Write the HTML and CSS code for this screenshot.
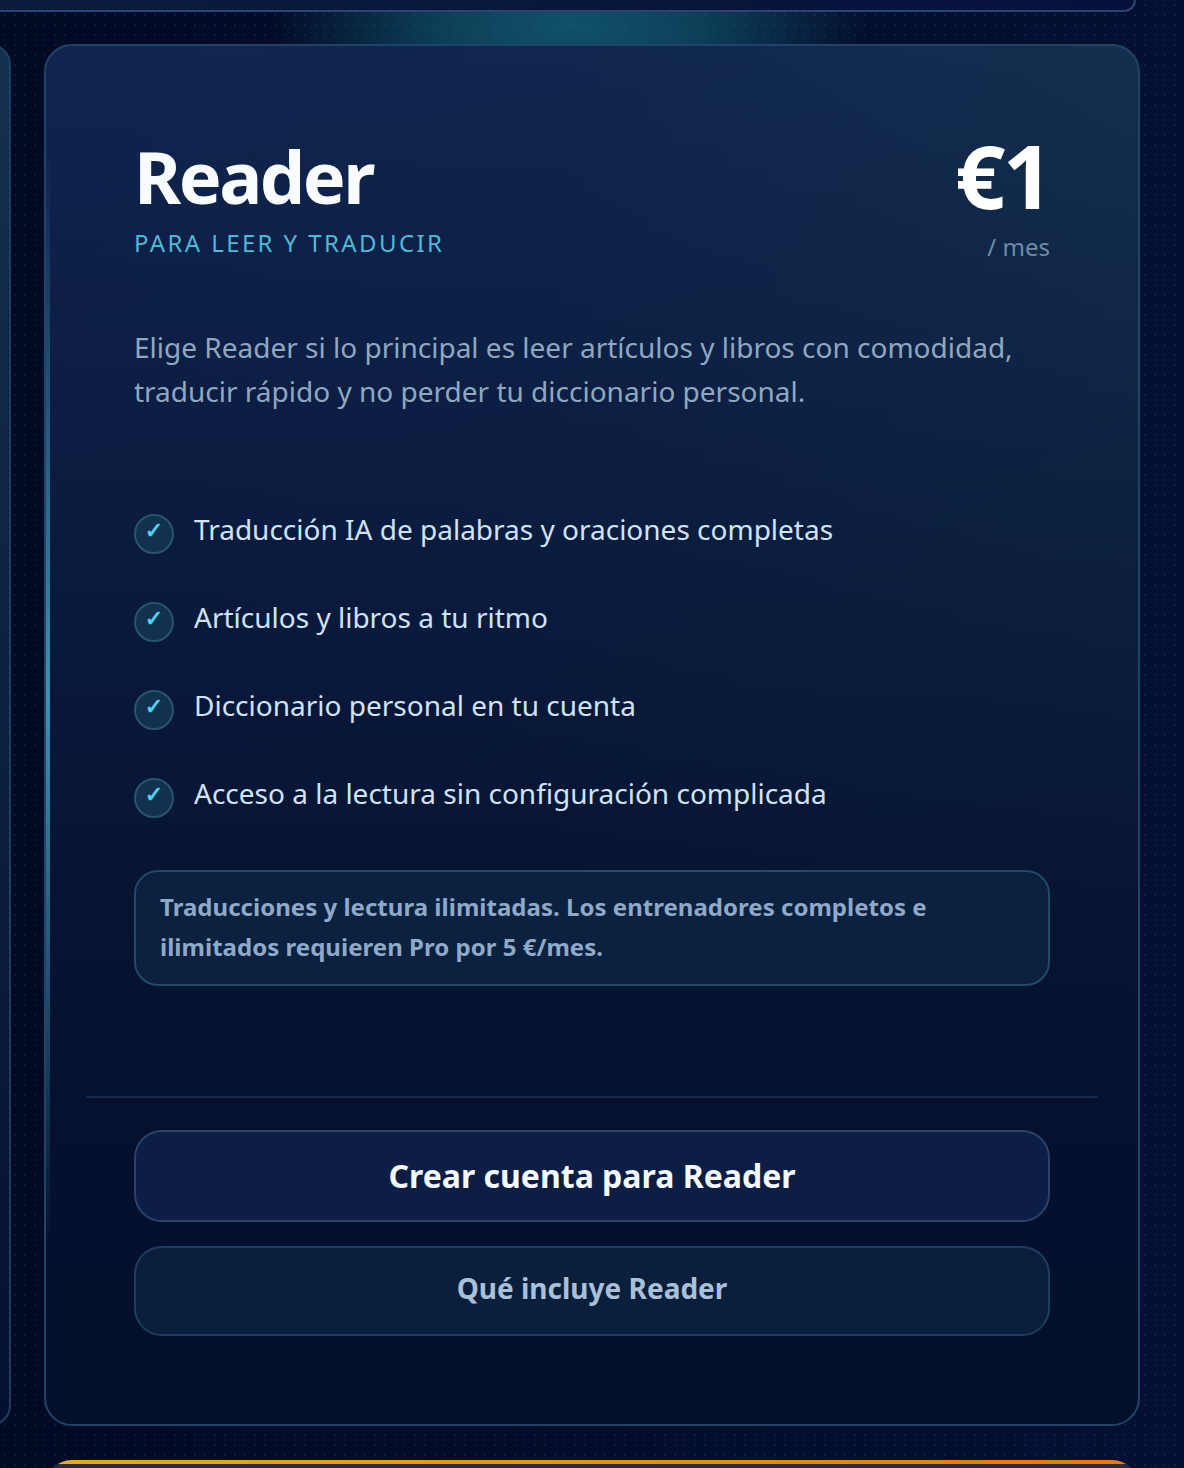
FILE: index.html
```html
<!DOCTYPE html>
<html lang="es">

<head>
    <meta charset="UTF-8">
    <meta name="viewport" content="width=device-width, initial-scale=1.0">
    <title>Reader</title>
    <link rel="stylesheet" href="styles.css">
</head>

<body>
    <div class="page">
        <div class="prev-plan"></div>

        <div class="plan-row">
            <div class="side-plan"></div>

            <section class="plan-card">
                <div class="plan-rail"></div>

                <div class="plan-body">
                    <header class="plan-head">
                        <div>
                            <h2 class="plan-name">Reader</h2>
                            <div class="plan-tag">PARA LEER Y TRADUCIR</div>
                        </div>
                        <div class="plan-price">
                            <div class="price-value">€1</div>
                            <div class="price-period">/ mes</div>
                        </div>
                    </header>

                    <p class="plan-desc">Elige Reader si lo principal es leer artículos y libros con comodidad, traducir rápido y no perder tu diccionario personal.</p>

                    <ul class="feature-list">
                        <li class="feature"><span class="feature-check">✓</span>Traducción IA de palabras y oraciones completas</li>
                        <li class="feature"><span class="feature-check">✓</span>Artículos y libros a tu ritmo</li>
                        <li class="feature"><span class="feature-check">✓</span>Diccionario personal en tu cuenta</li>
                        <li class="feature"><span class="feature-check">✓</span>Acceso a la lectura sin configuración complicada</li>
                    </ul>

                    <div class="plan-note">Traducciones y lectura ilimitadas. Los entrenadores completos e ilimitados requieren Pro por 5 €/mes.</div>
                </div>

                <footer class="plan-actions">
                    <a class="btn btn-primary">Crear cuenta para Reader</a>
                    <a class="btn btn-secondary">Qué incluye Reader</a>
                </footer>
            </section>
        </div>

        <div class="next-plan"></div>
    </div>
</body>

</html>
```

FILE: styles.css
```css
* {
    box-sizing: border-box;
}

body {
    margin: 0;
    background-color: #030d2c;
    font-family: "Noto Sans", Arial, sans-serif;
}

.page {
    height: 1468px;
    overflow: hidden;
    background-image:
        radial-gradient(ellipse 300px 130px at 570px 26px, rgba(22, 112, 132, 0.7) 0%, rgba(22, 112, 132, 0.5) 45%, transparent 100%),
        radial-gradient(circle at center, rgba(90, 130, 190, 0.13) 1px, transparent 1px),
        linear-gradient(90deg, #020a24 0%, #030d2c 60%, #041033 100%);
    background-size: 100% 100%, 10px 10px, 100% 100%;
}

.prev-plan {
    width: 1136px;
    height: 12px;
    background: linear-gradient(90deg, #0a1c3e, #061139);
    border-bottom: 2px solid #2b4474;
    border-right: 2px solid #2b4474;
    border-radius: 0 0 28px 0;
}

.plan-row {
    display: flex;
    gap: 33px;
    margin-top: 32px;
}

.side-plan {
    width: 41px;
    height: 1382px;
    margin-left: -30px;
    background: linear-gradient(180deg, #143050, #041030);
    border: 2px solid #1d3e62;
    border-radius: 28px;
}

.plan-card {
    position: relative;
    width: 1096px;
    height: 1382px;
    padding: 0 40px;
    background:
        linear-gradient(180deg, rgba(4, 16, 46, 0) 0%, #05112f 72%, #040f2c 100%),
        linear-gradient(100deg, #10244f 0%, #10264e 40%, #15324f 100%);
    border: 2px solid #1f4468;
    border-radius: 28px;
}

.plan-rail {
    position: absolute;
    left: 0;
    top: 100px;
    width: 4px;
    height: 1100px;
    background: linear-gradient(180deg, transparent, #3c93b5 50%, transparent);
}

.plan-body {
    height: 1052px;
    padding: 76px 48px 0;
    border-bottom: 2px solid #14284c;
}

.plan-head {
    display: flex;
    justify-content: space-between;
}

.plan-name {
    margin: 0;
    color: #f8fcff;
    font-size: 72px;
    line-height: 108px;
    letter-spacing: -2.5px;
    font-weight: 700;
}

.plan-tag {
    margin-top: -4px;
    color: #4fb9d6;
    font-size: 24px;
    line-height: 34px;
    letter-spacing: 2.4px;
}

.plan-price {
    text-align: right;
}

.price-value {
    color: #fff;
    font-size: 88px;
    line-height: 106px;
    font-weight: 700;
    letter-spacing: -3px;
}

.price-period {
    margin-top: 2px;
    color: #6f8aa5;
    font-size: 24px;
    line-height: 34px;
}

.plan-desc {
    margin: 61px 0 0;
    color: #8fa8c0;
    font-size: 28px;
    line-height: 44px;
}

.feature-list {
    list-style: none;
    margin: 72px 0 0;
    padding: 0;
}

.feature {
    display: flex;
    align-items: center;
    gap: 20px;
    height: 88px;
    color: #cfe3f5;
    font-size: 28px;
}

.feature-check {
    display: flex;
    align-items: center;
    justify-content: center;
    width: 40px;
    height: 40px;
    margin-top: 10px;
    padding-bottom: 7px;
    background: #12304f;
    border: 2px solid #27556f;
    border-radius: 50%;
    color: #4fd6ee;
    font-family: "DejaVu Sans", sans-serif;
    font-size: 22px;
    -webkit-text-stroke: 0.8px #4fd6ee;
}

.plan-note {
    margin-top: 33px;
    padding: 15px 24px;
    height: 116px;
    background: #0a2140;
    border: 2px solid #1f4a68;
    border-radius: 24px;
    color: #8fa9c8;
    font-size: 24px;
    line-height: 40px;
    font-weight: 700;
    letter-spacing: 0.02px;
}

.plan-actions {
    display: flex;
    flex-direction: column;
    gap: 24px;
    padding: 32px 48px 0;
}

.btn {
    display: flex;
    align-items: center;
    justify-content: center;
    border-radius: 28px;
    font-weight: 700;
}

.btn-primary {
    height: 92px;
    padding-bottom: 2px;
    background: #0c1e44;
    border: 2px solid #2a4468;
    color: #f4f9ff;
    font-size: 32px;
}

.btn-secondary {
    height: 90px;
    padding-bottom: 6px;
    background: #0a1f3b;
    border: 2px solid #1c3e60;
    color: #a9c0d8;
    font-size: 28px;
}

.next-plan {
    position: relative;
    width: 1096px;
    height: 60px;
    margin: 34px 0 0 44px;
    overflow: hidden;
    background: #2a2c40;
    border-radius: 28px 28px 0 0;
}

.next-plan::before {
    content: "";
    position: absolute;
    left: 0;
    top: 0;
    width: 100%;
    height: 4px;
    background: linear-gradient(90deg, #e9a81c, #e8760f);
}
```
